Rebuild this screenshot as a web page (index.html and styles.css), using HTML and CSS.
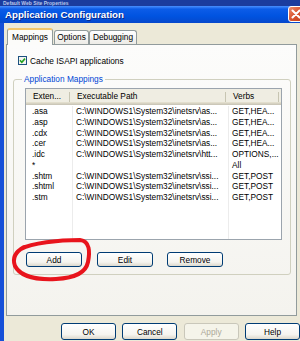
FILE: index.html
```html
<!DOCTYPE html>
<html>
<head>
    <title>Application Configuration</title>
    <link rel="stylesheet" href="styles.css">
</head>
<body>
    <!-- window behind, only its bottom edge shows -->
    <div class="backbar"><span>Default Web Site Properties</span></div>

    <div class="titlebar">
        <span class="title">Application Configuration</span>
        <span class="close">
            <svg width="16" height="16" viewBox="0 0 16 16">
                <path d="M4.5 4.5 L11.5 11.5 M11.5 4.5 L4.5 11.5" stroke="#fff" stroke-width="2" stroke-linecap="round"/>
            </svg>
        </span>
    </div>

    <div class="frame">
        <div class="tabs">
            <span class="tab active">Mappings</span>
            <span class="tab tab-options">Options</span>
            <span class="tab tab-debug">Debugging</span>
        </div>

        <div class="panel">
            <label class="check-row">
                <svg class="checkbox" width="9" height="9" viewBox="0 0 9 9">
                    <rect x="0.5" y="0.5" width="8" height="8" fill="#f4f4f0" stroke="#1c5180"/>
                    <path d="M2 4.3 L3.8 6.2 L7 2.6" fill="none" stroke="#21a121" stroke-width="1.6"/>
                </svg>
                Cache ISAPI applications
            </label>

            <fieldset class="group">
                <legend>Application Mappings</legend>

                <div class="listview">
                    <div class="lv-head">
                        <span class="lv-hcell">Exten...</span>
                        <span class="lv-hcell">Executable Path</span>
                        <span class="lv-hcell">Verbs</span>
                    </div>
                    <div class="lv-body">
                        <div class="lv-col col-ext">
                            <div class="lv-row">.asa</div>
                            <div class="lv-row">.asp</div>
                            <div class="lv-row">.cdx</div>
                            <div class="lv-row">.cer</div>
                            <div class="lv-row">.idc</div>
                            <div class="lv-row">*</div>
                            <div class="lv-row">.shtm</div>
                            <div class="lv-row">.shtml</div>
                            <div class="lv-row">.stm</div>
                        </div>
                        <div class="lv-col col-path">
                            <div class="lv-row">C:\WINDOWS1\System32\inetsrv\as...</div>
                            <div class="lv-row">C:\WINDOWS1\System32\inetsrv\as...</div>
                            <div class="lv-row">C:\WINDOWS1\System32\inetsrv\as...</div>
                            <div class="lv-row">C:\WINDOWS1\System32\inetsrv\as...</div>
                            <div class="lv-row">C:\WINDOWS1\System32\inetsrv\htt...</div>
                            <div class="lv-row"></div>
                            <div class="lv-row">C:\WINDOWS1\System32\inetsrv\ssi...</div>
                            <div class="lv-row">C:\WINDOWS1\System32\inetsrv\ssi...</div>
                            <div class="lv-row">C:\WINDOWS1\System32\inetsrv\ssi...</div>
                        </div>
                        <div class="lv-col col-verbs">
                            <div class="lv-row">GET,HEA...</div>
                            <div class="lv-row">GET,HEA...</div>
                            <div class="lv-row">GET,HEA...</div>
                            <div class="lv-row">GET,HEA...</div>
                            <div class="lv-row">OPTIONS,...</div>
                            <div class="lv-row">All</div>
                            <div class="lv-row">GET,POST</div>
                            <div class="lv-row">GET,POST</div>
                            <div class="lv-row">GET,POST</div>
                        </div>
                    </div>
                </div>

                <div class="group-buttons">
                    <button class="btn btn-add">Add</button>
                    <button class="btn btn-edit">Edit</button>
                    <button class="btn btn-remove">Remove</button>
                </div>
            </fieldset>
        </div>

        <div class="dialog-buttons">
            <button class="btn btn-dlg">OK</button>
            <button class="btn btn-dlg">Cancel</button>
            <button class="btn btn-dlg" disabled>Apply</button>
            <button class="btn btn-dlg">Help</button>
        </div>
    </div>

    <!-- red marker drawn over the Add button -->
    <svg class="marker" width="300" height="341" viewBox="0 0 300 341">
        <path d="M21 249 C32 243, 58 240, 80 240 C90 241, 90 252, 88 262 C86 272, 76 278, 56 279 C36 280, 20 276, 15 266 C12 258, 15 252, 24 247"
              fill="none" stroke="#e8141c" stroke-width="4" stroke-linecap="round" stroke-linejoin="round"/>
    </svg>
</body>
</html>
```

FILE: styles.css
```css
/* Reset some default styles */
body {
    margin: 0;
    padding: 0;
    width: 300px;
    height: 341px;
    overflow: hidden;
    position: relative;
    font-family: "Liberation Sans", Arial, sans-serif;
    font-size: 8.3px;
    color: #000;
    background-color: #ece9d8;
}

/* Window behind the dialog */
.backbar {
    height: 6px;
    overflow: hidden;
    background-color: #1b3c9e;
    color: #b9c6ea;
    font-weight: bold;
    font-size: 5px;
    line-height: 6px;
    padding-left: 3px;
}

/* Title bar */
.titlebar {
    height: 17px;
    display: flex;
    justify-content: space-between;
    align-items: center;
    background: linear-gradient(#4a90ff 0%, #0c5ce8 18%, #0053e0 60%, #0648cc 100%);
}

.title {
    padding-left: 5px;
    color: #fff;
    font-weight: bold;
    font-size: 9.7px;
    text-shadow: 1px 1px 0 #0b2a8a;
}

.close {
    width: 16px;
    height: 16px;
    margin-right: -4px;
    align-self: flex-start;
    box-sizing: border-box;
    border: 1px solid #fff;
    border-radius: 3px;
    background: linear-gradient(135deg, #ec8f6e 0%, #d8542f 50%, #c2401c 100%);
    display: flex;
}

.close svg {
    margin: -1px;
}

/* Dialog frame */
.frame {
    height: 318px;
    box-sizing: border-box;
    border-left: 4px solid #1650d8;
    padding: 5px 0 0 2px;
}

/* Tabs */
.tabs {
    height: 16px;
    display: flex;
    align-items: flex-end;
    margin-left: 1px;
}

.tab {
    height: 14px;
    box-sizing: border-box;
    border: 1px solid #919b9c;
    border-bottom: none;
    border-radius: 3px 3px 0 0;
    background: linear-gradient(#ffffff, #ecebe6);
    text-align: center;
    line-height: 13px;
}

.tab.active {
    width: 46px;
    height: 17px;
    margin-bottom: -1px;
    position: relative;
    z-index: 1;
    border-top: 2px solid #f2c66a;
    background: #fcfcfa;
    line-height: 14px;
}

.tab-options {
    width: 35px;
    margin-left: 1px;
}

.tab-debug {
    width: 48px;
}

/* Tab page */
.panel {
    width: 291px;
    height: 272px;
    box-sizing: border-box;
    border: 1px solid #919b9c;
    background: linear-gradient(#fcfcfb, #f4f3ee);
    padding: 11px 5px 0 6px;
}

.check-row {
    display: flex;
    align-items: center;
    gap: 3px;
    height: 9px;
    padding-left: 5px;
}

/* Group box */
.group {
    margin: 9px 0 0 0;
    padding: 0 8px 7px 11px;
    border: 1px solid #d0d0bf;
    border-radius: 3px;
}

.group legend {
    margin-left: -3px;
    padding: 0 2px;
    line-height: 10px;
    color: #0046d5;
}

/* List view */
.listview {
    margin-top: 4px;
    height: 152px;
    box-sizing: border-box;
    border: 1px solid #9ba4ad;
    background-color: #fff;
    display: flex;
    flex-direction: column;
}

.lv-head {
    height: 16px;
    flex: none;
    display: grid;
    grid-template-columns: 44px 156px 53px 1fr;
    background-color: #efede2;
    box-shadow: inset 0 -1px #cbc7b8, inset 0 -2px #d6d2c2, inset 0 -3px #e2decd;
}

.lv-hcell {
    padding-left: 7px;
    line-height: 15px;
    background: linear-gradient(#c7c5b2, #c7c5b2) right 3px / 1px 10px no-repeat;
}

.lv-body {
    flex: 1;
    display: flex;
    padding-top: 1px;
}

.lv-col {
    box-sizing: border-box;
    border-right: 1px solid #ececec;
    padding-left: 3px;
    overflow: hidden;
}

.col-ext {
    width: 47px;
    padding-left: 6px;
}

.col-path {
    width: 156px;
}

.col-verbs {
    flex: 1;
    border-right: none;
}

.lv-row {
    height: 10.75px;
    line-height: 10.75px;
    white-space: nowrap;
}

/* Buttons */
.btn {
    height: 15px;
    width: 56px;
    padding: 0;
    box-sizing: border-box;
    border: 1px solid #003c74;
    border-radius: 3px;
    background: linear-gradient(#ffffff 0%, #f5f4ef 70%, #dcd8cc 100%);
    font-family: "Liberation Sans", Arial, sans-serif;
    font-size: 8.3px;
    color: #000;
}

.btn:disabled {
    border-color: #c9c7ba;
    background: #f5f4ea;
    color: #aca899;
}

.group-buttons {
    display: flex;
    margin-top: 12px;
    margin-left: 1px;
}

.btn-edit {
    margin-left: 15px;
}

.btn-remove {
    margin-left: 14px;
}

.dialog-buttons {
    display: flex;
    gap: 6.5px;
    margin-top: 7px;
    padding-left: 55px;
}

.btn-dlg {
    width: 55px;
    height: 17px;
}

/* Red marker */
.marker {
    position: absolute;
    left: 0;
    top: 0;
    pointer-events: none;
}
```
